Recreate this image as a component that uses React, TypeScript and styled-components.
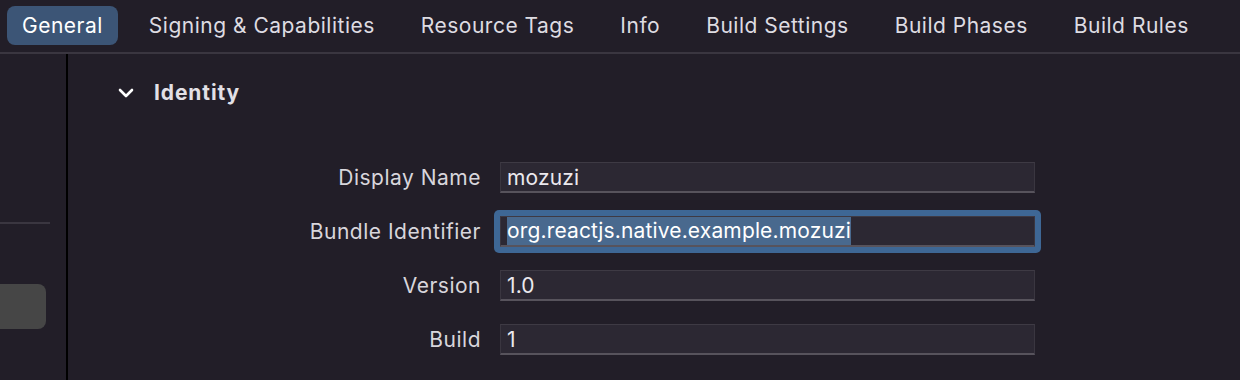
import styled, { createGlobalStyle } from 'styled-components';

const tabs = ['General', 'Signing & Capabilities', 'Resource Tags', 'Info', 'Build Settings', 'Build Phases', 'Build Rules'];

type FieldType = {
	label: string
	value: string
	focused?: boolean
}

const fields: FieldType[] = [
	{ label: 'Display Name', value: 'mozuzi' },
	{ label: 'Bundle Identifier', value: 'org.reactjs.native.example.mozuzi', focused: true },
	{ label: 'Version', value: '1.0' },
	{ label: 'Build', value: '1' },
];

const Chevron = () => (
	<svg width="16" height="12" viewBox="0 0 16 12">
		<path d="M2 3 L8 9 L14 3" fill="none" stroke="#fff" strokeWidth="2.6" strokeLinecap="round" strokeLinejoin="round" />
	</svg>
)

export default function App() {
	return (
		<>
			<GlobalStyle />
			<StyledWindow>
				<StyledTabBar>
					{tabs.map((t, i) => (
						<StyledTab key={t} $active={i === 0}>{t}</StyledTab>
					))}
				</StyledTabBar>
				<StyledBody>
					<StyledSidebar>
						<StyledSideRule />
						<StyledSideButton />
					</StyledSidebar>
					<StyledDivider />
					<StyledContent>
						<StyledSectionHeader>
							<Chevron />
							<span>Identity</span>
						</StyledSectionHeader>
						<StyledForm>
							{fields.map((f) => (
								<StyledRow key={f.label}>
									<StyledLabel>{f.label}</StyledLabel>
									<StyledFieldWrap $focused={f.focused}>
										<StyledInput>
											{f.focused ? <StyledSelection>{f.value}</StyledSelection> : f.value}
										</StyledInput>
									</StyledFieldWrap>
								</StyledRow>
							))}
						</StyledForm>
					</StyledContent>
				</StyledBody>
			</StyledWindow>
		</>
	)
}

const GlobalStyle = createGlobalStyle`
	* { box-sizing: border-box; }
	html, body {
		margin: 0;
		padding: 0;
		background: #221e28;
	}
	body {
		font-family: Inter, "Noto Sans", "Liberation Sans", sans-serif;
		-webkit-font-smoothing: antialiased;
	}
`

const StyledWindow = styled.div`
	width: 1240px;
	height: 380px;
	background: #221e28;
	display: flex;
	flex-direction: column;
	overflow: hidden;
`

const StyledTabBar = styled.div`
	height: 54px;
	display: flex;
	align-items: flex-start;
	gap: 16px;
	padding: 6px 0 0 7px;
	border-bottom: 2px solid #3a3640;
`

const StyledTab = styled.div<{ $active?: boolean }>`
	height: 39px;
	padding: 0 15px;
	display: flex;
	align-items: center;
	border-radius: 8px;
	font-size: 21px;
	letter-spacing: 0.5px;
	white-space: nowrap;
	color: ${(p) => (p.$active ? '#ffffff' : '#dedce2')};
	background: ${(p) => (p.$active ? '#3c5576' : 'transparent')};
`

const StyledBody = styled.div`
	flex: 1;
	display: flex;
`

const StyledSidebar = styled.div`
	width: 66px;
	padding-top: 168px;
	display: flex;
	flex-direction: column;
`

const StyledSideRule = styled.div`
	width: 50px;
	height: 2px;
	background: #3a3640;
`

const StyledSideButton = styled.div`
	margin-top: 60px;
	width: 46px;
	height: 45px;
	background: #464646;
	border-radius: 0 8px 8px 0;
`

const StyledDivider = styled.div`
	width: 2px;
	background: #000;
`

const StyledContent = styled.div`
	flex: 1;
	padding: 27px 0 0 50px;
`

const StyledSectionHeader = styled.div`
	display: flex;
	align-items: center;
	gap: 20px;
	height: 22px;
	font-size: 21px;
	font-weight: 700;
	letter-spacing: 0.9px;
	color: #e2e0e6;

	svg {
		margin-top: 2px;
	}
`

const StyledForm = styled.div`
	margin-top: 59px;
	display: flex;
	flex-direction: column;
	gap: 23px;
`

const StyledRow = styled.div`
	display: flex;
	align-items: center;
	height: 31px;
`

const StyledLabel = styled.div`
	width: 363px;
	text-align: right;
	font-size: 21px;
	letter-spacing: 0.5px;
	color: #d8d6dc;
	white-space: nowrap;
`

const StyledFieldWrap = styled.div<{ $focused?: boolean }>`
	margin-left: ${(p) => (p.$focused ? '13px' : '19px')};
	padding: ${(p) => (p.$focused ? '6px' : '0')};
	margin-top: ${(p) => (p.$focused ? '-6px' : '0')};
	margin-bottom: ${(p) => (p.$focused ? '-6px' : '0')};
	border-radius: 5px;
	background: ${(p) => (p.$focused ? '#3e6795' : 'transparent')};
`

const StyledInput = styled.div`
	width: 535px;
	height: 31px;
	padding: 0 6px;
	display: flex;
	align-items: center;
	background: #2c2833;
	border-top: 1px solid #3e3a44;
	border-left: 1px solid #3a3640;
	border-right: 1px solid #3a3640;
	border-bottom: 2px solid #57535c;
	font-size: 21px;
	letter-spacing: 0.15px;
	color: #ebe9ee;
	white-space: nowrap;
`

const StyledSelection = styled.span`
	background: #49698e;
	color: #ffffff;
	line-height: 28px;
`
